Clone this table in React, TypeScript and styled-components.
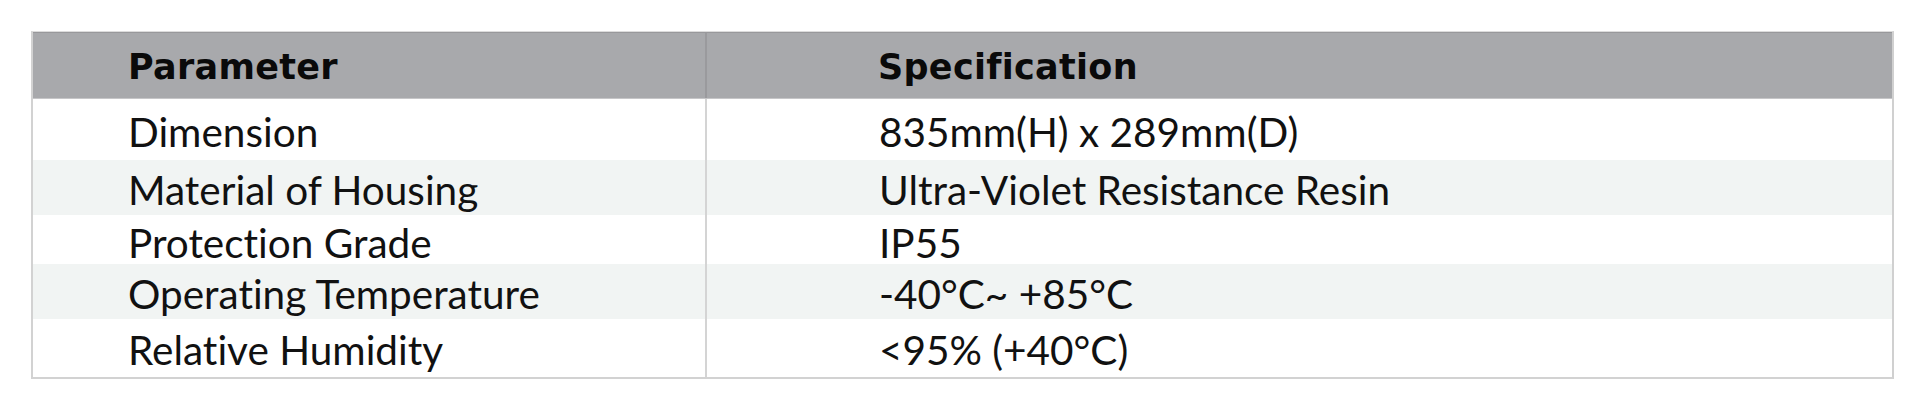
import React from "react";
import styled, { createGlobalStyle } from "styled-components";

const Global = createGlobalStyle`
  html, body { margin: 0; padding: 0; background: #ffffff; }
  body {
    font-family: "Lato", "Noto Sans", sans-serif;
    color: #111111;
    font-variant-ligatures: none;
    font-feature-settings: "liga" 0, "clig" 0;
  }
`;

const Page = styled.div`
  padding: 31px 31px 0 31px;
`;

const Table = styled.div`
  width: 1863px;
  box-sizing: border-box;
  border-top: 1px solid #dcdcdc;
  border-left: 2px solid #d2d2d2;
  border-right: 2px solid #d0d0d0;
  border-bottom: 2px solid #d2d2d2;
  display: flex;
  flex-direction: column;
`;

const HeaderRow = styled.div`
  display: grid;
  grid-template-columns: 674px 1fr;
  height: 67px;
  box-sizing: border-box;
  background: #a8a9ac;
  border-top: 1px solid #98989b;
  border-bottom: 1px solid #c6c6c8;
`;

const HeaderCell = styled.div<{ $pad: number; $divider?: boolean }>`
  display: flex;
  align-items: center;
  padding-left: ${(p) => p.$pad}px;
  padding-top: 2px;
  border-right: ${(p) => (p.$divider ? "2px solid #9a9a9d" : "none")};
  font-family: "DejaVu Sans", "Liberation Sans", sans-serif;
  font-weight: 700;
  font-size: 35px;
  color: #0a0a0a;
  letter-spacing: 0.3px;
`;

const BodyRow = styled.div<{ $h: number; $striped: boolean }>`
  display: grid;
  grid-template-columns: 674px 1fr;
  height: ${(p) => p.$h}px;
  background: ${(p) => (p.$striped ? "#f1f4f3" : "#ffffff")};
`;

const Cell = styled.div<{ $pad: number; $divider?: boolean }>`
  display: flex;
  align-items: center;
  padding-left: ${(p) => p.$pad}px;
  padding-top: 3px;
  border-right: ${(p) => (p.$divider ? "2px solid #d4d4d4" : "none")};
  font-family: "Lato", "Noto Sans", sans-serif;
  font-weight: 400;
  font-size: 40.5px;
  color: #111111;
  white-space: nowrap;
  font-variant-ligatures: none;
  font-feature-settings: "liga" 0, "clig" 0;
`;

const rows = [
  { name: "Dimension", value: "835mm(H) x 289mm(D)", h: 61 },
  { name: "Material of Housing", value: "Ultra-Violet Resistance Resin", h: 55 },
  { name: "Protection Grade", value: "IP55", h: 49 },
  { name: "Operating Temperature", value: "-40\u00B0C~ +85\u00B0C", h: 55 },
  { name: "Relative Humidity", value: "<95% (+40\u00B0C)", h: 58 },
];

export default function App() {
  return (
    <>
      <Global />
      <Page>
        <Table>
          <HeaderRow>
            <HeaderCell $pad={95} $divider>
              Parameter
            </HeaderCell>
            <HeaderCell $pad={171}>Specification</HeaderCell>
          </HeaderRow>
          {rows.map((r, i) => (
            <BodyRow key={r.name} $h={r.h} $striped={i % 2 === 1}>
              <Cell $pad={95} $divider>
                {r.name}
              </Cell>
              <Cell $pad={172}>{r.value}</Cell>
            </BodyRow>
          ))}
        </Table>
      </Page>
    </>
  );
}
